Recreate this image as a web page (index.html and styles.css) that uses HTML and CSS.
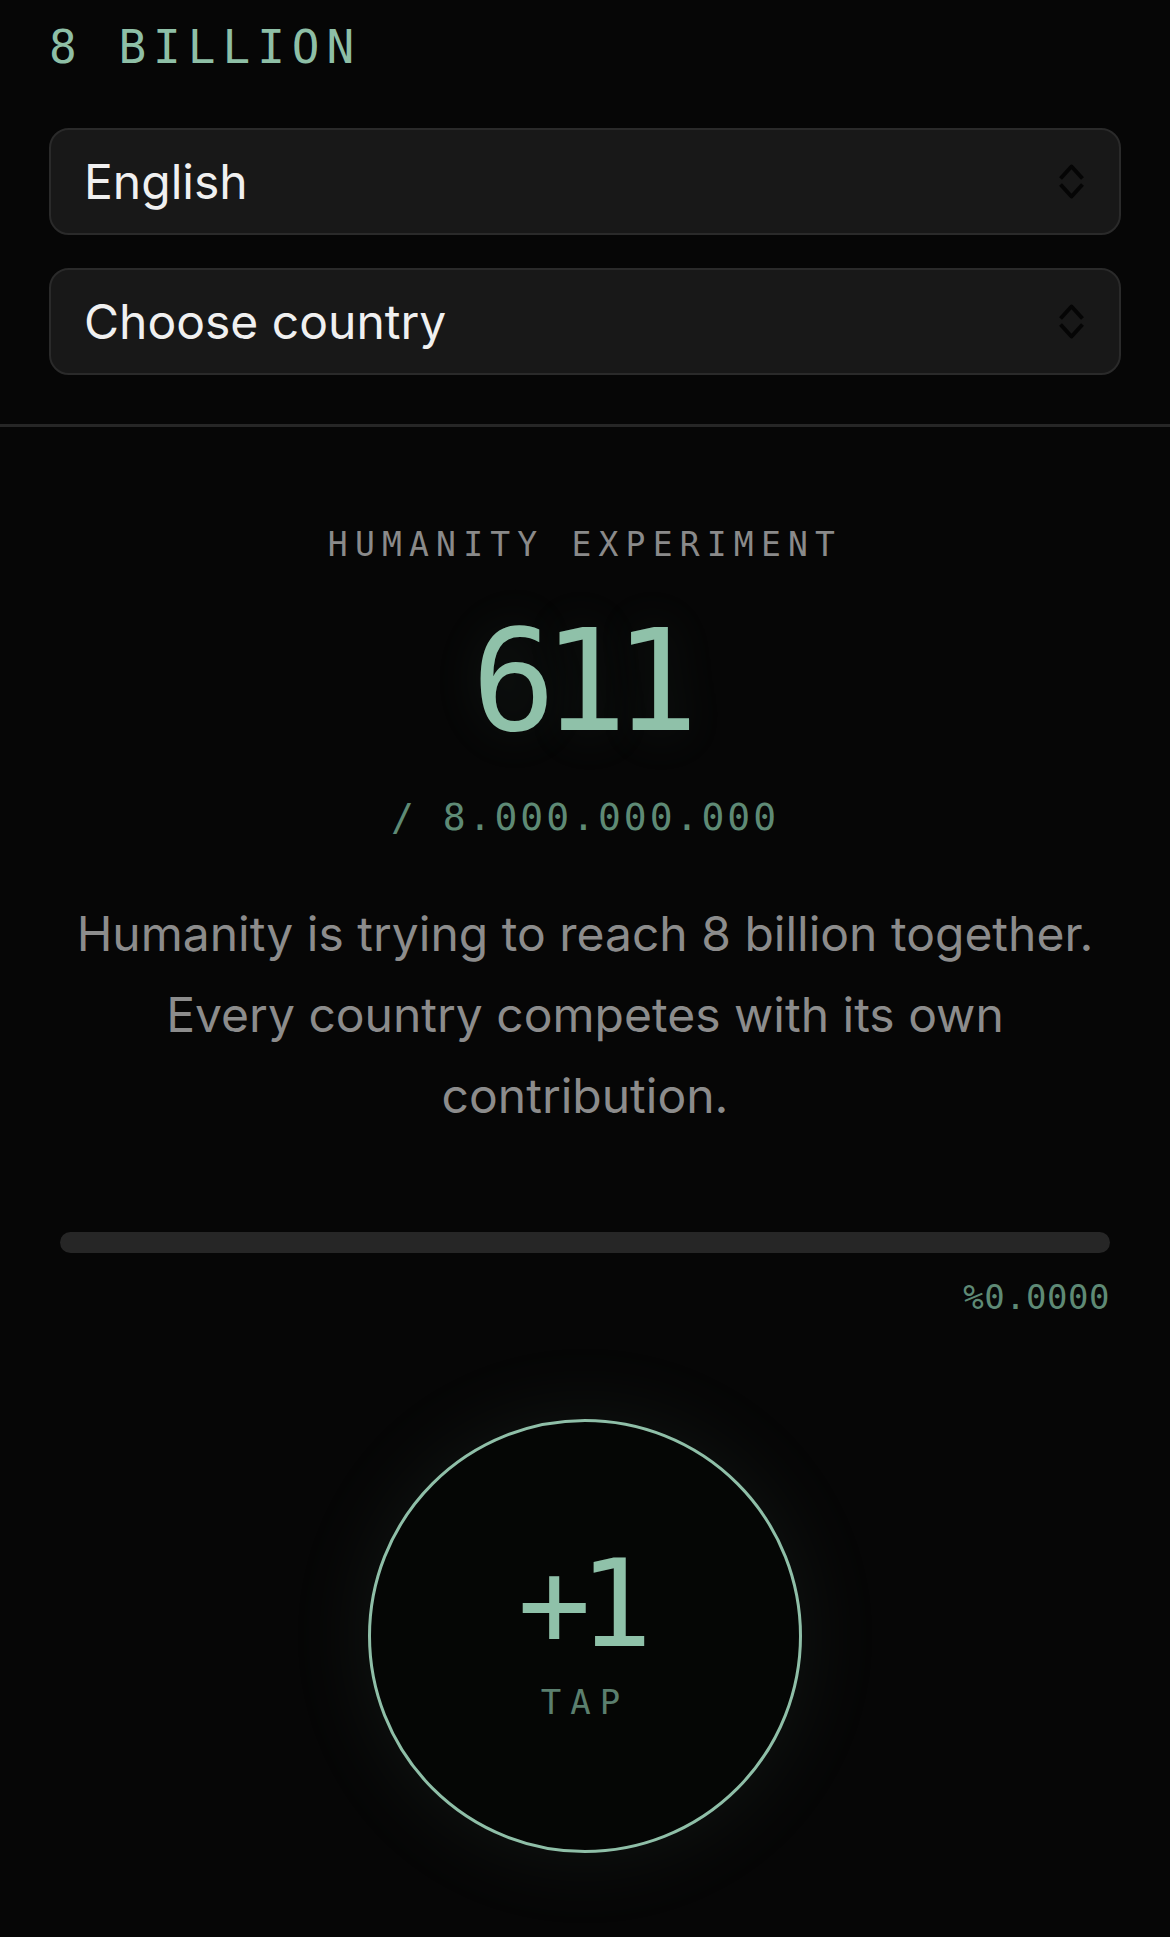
FILE: index.html
```html
<!DOCTYPE html>
<html lang="en">
<head>
    <meta charset="UTF-8">
    <meta name="viewport" content="width=device-width, initial-scale=1.0">
    <title>8 Billion</title>
    <link rel="stylesheet" href="styles.css">
</head>
<body>

<header class="top-bar">
    <h1 class="brand">8 BILLION</h1>

    <label class="picker">
        <select id="language">
            <option>English</option>
            <option>Türkçe</option>
            <option>Deutsch</option>
        </select>
        <svg class="picker-arrows" viewBox="0 0 27 37" aria-hidden="true">
            <path d="M2.5 15.5 L13.5 3.5 L24.5 15.5" />
            <path d="M2.5 21.5 L13.5 33.5 L24.5 21.5" />
        </svg>
    </label>

    <label class="picker">
        <select id="country">
            <option>Choose country</option>
        </select>
        <svg class="picker-arrows" viewBox="0 0 27 37" aria-hidden="true">
            <path d="M2.5 15.5 L13.5 3.5 L24.5 15.5" />
            <path d="M2.5 21.5 L13.5 33.5 L24.5 21.5" />
        </svg>
    </label>
</header>

<main class="experiment">
    <p class="eyebrow">HUMANITY EXPERIMENT</p>
    <div class="counter" id="counter">611</div>
    <div class="goal">/ 8.000.000.000</div>

    <p class="intro">Humanity is trying to reach 8 billion together. Every country competes with its own contribution.</p>

    <div class="progress">
        <div class="progress-fill" id="progress-fill" style="width: 0%"></div>
    </div>
    <div class="percent" id="percent">%0.0000</div>

    <button class="tap-button" id="tap">
        <span class="tap-plus">+1</span>
        <span class="tap-label">TAP</span>
    </button>
</main>

</body>
</html>
```

FILE: styles.css
```css
/* 8 Billion - mobile counter page */
body {
    background-color: #060606;
    margin: 0;
    font-family: Inter, "Noto Sans", sans-serif;
    color: #f0f0f0;
}

.top-bar {
    padding: 24px 49px 49px;
    border-bottom: 3px solid #262626;
}

.brand {
    margin: 0 0 58px;
    font-family: "DejaVu Sans Mono", monospace;
    font-weight: normal;
    font-size: 46px;
    line-height: 46px;
    letter-spacing: 7px;
    color: #8ebfa6;
}

.picker {
    position: relative;
    display: block;
    margin-bottom: 33px;
}

.picker:last-child {
    margin-bottom: 0;
}

.picker select {
    display: block;
    width: 100%;
    height: 107px;
    padding: 0 33px;
    background-color: #181818;
    border: 2px solid #2a2a2a;
    border-radius: 20px;
    color: #f0f0f0;
    font-family: Inter, "Noto Sans", sans-serif;
    font-size: 48px;
    appearance: none;
    -webkit-appearance: none;
    outline: none;
}

.picker-arrows {
    position: absolute;
    right: 36px;
    top: 35px;
    width: 27px;
    height: 37px;
    pointer-events: none;
    fill: none;
    stroke: #050505;
    stroke-width: 4;
    stroke-linejoin: round;
}

.experiment {
    padding: 101px 60px 80px;
    display: flex;
    flex-direction: column;
    align-items: center;
    text-align: center;
}

.eyebrow {
    margin: 0;
    font-family: "DejaVu Sans Mono", monospace;
    font-size: 33px;
    line-height: 33px;
    letter-spacing: 7.2px;
    color: #8a8a8a;
}

.counter {
    margin-top: 51px;
    padding-right: 13px;
    font-family: "DejaVu Sans Mono", monospace;
    font-size: 140px;
    line-height: 140px;
    letter-spacing: -13px;
    color: #8fc1a9;
    text-shadow: 0 0 50px rgba(143, 193, 169, 0.12);
}

.goal {
    margin-top: 46px;
    font-family: "DejaVu Sans Mono", monospace;
    font-size: 38px;
    line-height: 38px;
    letter-spacing: 3px;
    color: #5e8a75;
}

.intro {
    margin: 57px 0 0;
    font-size: 48px;
    line-height: 81px;
    color: #8c8c8c;
}

.progress {
    align-self: stretch;
    height: 21px;
    margin-top: 96px;
    border-radius: 11px;
    background-color: #262626;
    overflow: hidden;
}

.progress-fill {
    height: 100%;
    background-color: #8ebfa6;
}

.percent {
    align-self: flex-end;
    margin-top: 27px;
    font-family: "DejaVu Sans Mono", monospace;
    font-size: 34px;
    line-height: 34px;
    letter-spacing: 0.5px;
    color: #5e8a75;
}

.tap-button {
    margin-top: 105px;
    width: 434px;
    height: 434px;
    padding: 0 0 12px;
    border: 3px solid #8fbfa8;
    border-radius: 50%;
    background-color: #050605;
    box-shadow: 0 0 90px rgba(143, 191, 168, 0.09);
    display: flex;
    flex-direction: column;
    align-items: center;
    justify-content: center;
    cursor: pointer;
}

.tap-plus {
    padding-right: 12px;
    font-family: "DejaVu Sans Mono", monospace;
    font-size: 122px;
    line-height: 125px;
    letter-spacing: -12px;
    color: #8fc1a9;
}

.tap-label {
    margin-top: 18px;
    font-family: "DejaVu Sans Mono", monospace;
    font-size: 34px;
    line-height: 34px;
    letter-spacing: 9px;
    color: #5b7f6e;
}
```
